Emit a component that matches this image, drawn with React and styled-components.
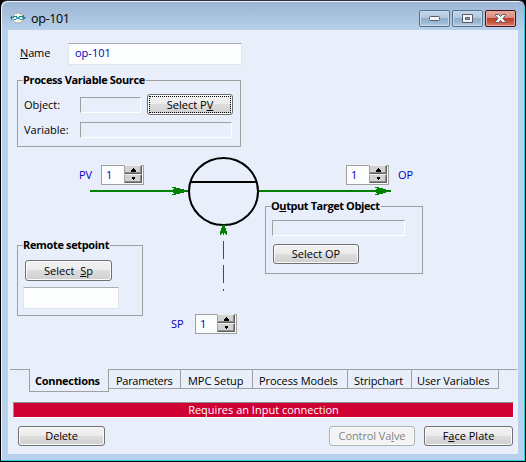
import React from "react";
import styled, { createGlobalStyle } from "styled-components";

const Global = createGlobalStyle`
  * { box-sizing: border-box; }
  body { margin: 0; background: #000; font: 11px/14px "Open Sans", "Noto Sans", sans-serif; color: #000; overflow: hidden; }
`;

const Window = styled.main`
  width: 526px; height: 462px; display: flex; flex-direction: column;
  padding: 1px 8px 7px 7px;
  border: solid 1px; border-color: #302d36 #000 #000 #000;
  border-radius: 7px 7px 0 0;
  background: linear-gradient(#9ab5d3, #b9d1ea 30px);
  box-shadow: inset -1px -1px 0 #2bd0e6, inset 1px 1px 0 #eef4fb;
`;
const TitleBar = styled.header`
  width: 508px; height: 28px; flex: none; display: flex; align-items: flex-start; padding-left: 2px;
`;
const TitleIcon = styled.svg`width: 16px; height: 12px; margin: 10px 0 0;`;
const Title = styled.h1`
  margin: 9px auto 0 5px; font: 12.5px/16px "Open Sans", sans-serif; letter-spacing: -0.35px;
`;
const Caption = styled.button`
  width: 31px; height: 17px; margin: 8px 0 0 2px; padding: 0; flex: none;
  display: flex; align-items: center; justify-content: center;
  border: 1px solid ${p => (p.$close ? "#43101d" : "#59708c")}; border-radius: 2px;
  box-shadow: inset 0 0 0 1px ${p => (p.$close ? "#e9a69b" : "#c7daed")};
  background: ${p => (p.$close
    ? "linear-gradient(#e3a196 0 15%, #d58b7e 45%, #b83e25 50%, #c9553c 75%, #d98373)"
    : "linear-gradient(#bed2e8 0 15%, #b1c8e0 45%, #91aeca 50%, #9bb7d2 75%, #b7d0e8)")};
  & + & { margin-left: 2px; }
`;
const Client = styled.section`
  width: 510px; height: 424px; background: #e8effa; display: flex; flex-direction: column; padding: 13px 5px 0 9px;
`;
const Row = styled.div`display: flex; align-items: center;`;
const Text = styled.span`
  display: block; flex: none; white-space: nowrap;
  width: ${p => (p.$w ? p.$w + "px" : "auto")};
  letter-spacing: ${p => p.$ls || 0}px;
  color: ${p => p.$color || "inherit"};
  u { text-underline-offset: 1px; text-decoration-thickness: 1px; }
`;
const NameRow = styled(Row)`
  height: 22px; padding-left: 3px;
  > ${Text} { padding-bottom: 2px; }
`;
const Entry = styled.div`
  width: ${p => p.$w}px; height: 22px; padding: 2px 6px; color: #0000c0;
  background: #fcfdfd; border: 1px solid #dfe4ec; border-top-color: #abadb3; border-radius: 1px;
`;
const Readout = styled.div`
  width: ${p => p.$w}px; height: 16px; border: 1px solid #fff;
  border-top-color: #a0a0a0; border-left-color: #a0a0a0;
`;
const Push = styled.button`
  width: ${p => p.$w}px; height: ${p => p.$h || 21}px; flex: none; padding: 0;
  display: flex; align-items: center; justify-content: center;
  font: inherit; color: ${p => (p.disabled ? "#838383" : "#000")};
  border: 1px solid ${p => (p.disabled ? "#adb2b5" : "#707070")}; border-radius: 3px;
  background: ${p => (p.disabled ? "#f4f4f4" : "linear-gradient(#f2f2f2, #ebebeb 50%, #dddddd 50%, #cfcfcf)")};
  box-shadow: inset 0 0 0 1px #fbfbfb;
  outline: ${p => (p.$focused ? "1px dotted #000" : "none")}; outline-offset: -3px;
`;
const Group = styled.fieldset`
  margin: 0; width: ${p => p.$w}px; height: ${p => p.$h}px; padding: 0 0 0 5px;
  border: 1px solid #a0a0a0; min-width: 0;
`;
const Legend = styled.legend`
  padding: 0 1px 0 0; height: 14px; line-height: 14px; font-weight: 700; white-space: nowrap;
  letter-spacing: ${p => p.$ls || 0}px;
  u { text-underline-offset: 1px; text-decoration-thickness: 1px; }
`;
const SourceGroup = styled(Group)`margin-top: 8px;`;
const ObjectRow = styled(Row)`height: 21px; margin-top: 7px; padding-left: 1px; gap: 6px;`;
const VariableRow = styled(Row)`height: 16px; margin-top: 7px; padding-left: 1px;`;
const LoopArea = styled.section`
  position: relative; height: 222px; flex: none; display: flex; align-items: flex-start;
`;
const LoopDrawing = styled.svg`
  position: absolute; left: -9px; top: 0; width: 510px; height: 212px; pointer-events: none;
`;
const LeftColumn = styled.div`width: 178px; padding-top: 18px;`;
const MiddleColumn = styled.div`width: 70px; padding-top: 167px;`;
const RightColumn = styled.div`width: 158px; padding-top: 18px;`;
const PvRow = styled(Row)`padding-left: 62px; height: 20px;`;
const SpRow = styled(Row)`margin-left: -24px; height: 20px;`;
const OpRow = styled(Row)`padding-left: 81px; height: 20px; gap: 9px;`;
const SetpointGroup = styled(Group)`margin-top: 53px; legend + * { margin: 8px 0 6px 2px; }`;
const OutputGroup = styled(Group)`margin-top: 14px; legend + * { margin: 7px 0 8px 1px; } button { margin-left: 2px; }`;
const SpinBox = styled.div`
  width: ${p => p.$w}px; height: 20px; flex: none; display: flex; justify-content: space-between; padding-left: 4px;
  color: #0000c0; background: #fcfdfd; border: 1px solid #a0a0a0; line-height: 17px;
`;
const SpinButtons = styled.div`
  width: 18px; height: 18px; margin: -1px 1px 0 0; display: flex; flex-direction: column;
`;
const SpinButton = styled.div`
  height: 9px; display: flex; align-items: center; justify-content: center;
  background: #d2d2d2; border: 1px solid #606060; border-top-color: #f0f0f0; border-left-color: #a0a0a0;
  box-shadow: inset -1px -1px 0 #8c8c8c; border-radius: 1px;
  svg { width: 5px; height: 4px; }
`;
const Tabs = styled.nav`
  height: 24px; flex: none; display: flex; align-items: flex-start; margin: 0 -4px 0 -7px;
  &::before { content: ""; width: 19px; border-top: 1px solid #a0a0a0; }
  &::after { content: ""; flex: 1; border-top: 1px solid #a0a0a0; }
`;
const Tab = styled.div`
  width: ${p => p.$w}px; height: ${p => (p.$active ? 23 : 20)}px; padding: 5px 0 0 ${p => p.$pad}px;
  border: solid #a0a0a0; border-width: ${p => (p.$active ? "0 1px 1px 1px" : "1px 1px 1px 0")};
  font-weight: ${p => (p.$active ? 700 : 400)};
  ${Text} { margin-top: ${p => (p.$active ? 0 : -1)}px; }
`;
const Status = styled.div`
  width: 501px; height: 16px; margin: 9px 0 0 -4px; flex: none;
  display: flex; justify-content: center; align-items: center; color: #fff; background: #cf0033;
  border: 1px solid #fff; border-top-color: #909090; border-left-color: #909090;
`;
const Actions = styled(Row)`margin-top: 8px; padding-left: 1px; gap: 9px;`;
const Spacer = styled.div`flex: 1;`;

function Spinner({ width = 43 }) {
  return (
    <SpinBox $w={width}>
      <span>1</span>
      <SpinButtons>
        <SpinButton><svg viewBox="0 0 5 4" shapeRendering="crispEdges"><path d="M2 0h1v1h1v1h1v2H0V2h1V1h1z" /></svg></SpinButton>
        <SpinButton><svg viewBox="0 0 5 4" shapeRendering="crispEdges"><path d="M1 0h3v2H3v1H2V2H1z" /></svg></SpinButton>
      </SpinButtons>
    </SpinBox>
  );
}

function Loop() {
  return (
    <LoopDrawing viewBox="8 147 510 212">
      <ellipse cx="223.5" cy="191.500" rx="34.500" ry="33.500" fill="#e8effa" stroke="#000" strokeWidth="2" />
      <path d="M190 181h67v2h-67z" />
      <g fill="#008000" shapeRendering="crispEdges">
        <path d="M90 190h98v2H90zM259 190h132v2H259z" />
        <path d="M172 187h4v1h4v1h4v1h4v2h-4v1h-4v1h-4v1h-4v-1h2v-1h-1v-1h2v-2h-2v-1h1v-1h-2z" />
        <path d="M375 187h4v1h4v1h3v1h5v2h-5v1h-3v1h-4v1h-4v-1h2v-1h-1v-1h2v-2h-2v-1h1v-1h-2z" />
        <path d="M222 225h3v3h1v3h1v4h-1v-1h-1v-1h-1v2h-1v-2h-1v1h-1v1h-1v-4h1v-3h1z" />
        <path d="M223 241h1v18h-1zM223 265h1v18h-1zM223 289h1v2h-1z" />
      </g>
    </LoopDrawing>
  );
}

const tabs = [
  ["Parameters", 72, 7, -0.3],
  ["MPC Setup", 72, 7, -0.05],
  ["Process Models", 95, 6, -0.1],
  ["Stripchart", 64, 6, -0.15],
  ["User Variables", 87, 5, -0.1],
];

export default function App() {
  return (
    <>
      <Global />
      <Window>
        <TitleBar>
          <TitleIcon viewBox="0 0 16 12">
            <circle cx="8" cy="6" r="5" fill="#f6f5ef" stroke="#96968f" strokeDasharray="2 1" />
            <path d="M0 5h1V4h1v1h2v1H2v2H1V6H0zM12 5h1V3h1v2h2v1h-1v1h-1v1h-1V6h-1z" fill="#1684c4" />
            <path d="M3 4h4v1H3zM9 4h4v1H9zM4 7h2v1H4zM10 7h2v1h-2z" fill="#18905c" />
            <path d="M6 5h4v2H6z" fill="#2ba5d6" />
          </TitleIcon>
          <Title>op-101</Title>
          <Caption aria-label="Minimize">
            <svg width="11" height="5"><rect x=".5" y=".5" width="10" height="4" rx="1" fill="#f5f5f5" stroke="#555b6c" /></svg>
          </Caption>
          <Caption aria-label="Maximize">
            <svg width="11" height="9"><path d="M.5.5h10v8H.5zM3.500 3.500v2h4v-2z" fill="#f5f5f5" stroke="#555b6c" fillRule="evenodd" /></svg>
          </Caption>
          <Caption $close aria-label="Close">
            <svg width="11" height="9"><path d="M.5.5h3l2 2 2-2h3v1L8 4.500l2.500 3v1h-3l-2-2-2 2h-3v-1L3 4.500l-2.500-3z" fill="#f5f5f5" stroke="#555b6c" /></svg>
          </Caption>
        </TitleBar>
        <Client>
          <NameRow>
            <Text $w={48} $ls={-0.15}><u>N</u>ame</Text>
            <Entry $w={174}><Text>op-101</Text></Entry>
          </NameRow>
          <SourceGroup $w={224} $h={74}>
            <Legend $ls={-0.37}>Process Variable Source</Legend>
            <ObjectRow>
              <Text $w={50} $ls={-0.05}>Object:</Text>
              <Readout $w={61} />
              <Push $w={86} $focused><Text>Select P<u>V</u></Text></Push>
            </ObjectRow>
            <VariableRow>
              <Text $w={56}>Variable:</Text>
              <Readout $w={152} />
            </VariableRow>
          </SourceGroup>
          <LoopArea>
            <Loop />
            <LeftColumn>
              <PvRow><Text $w={22} $color="#0000c0">PV</Text><Spinner /></PvRow>
              <SetpointGroup $w={126} $h={78}>
                <Legend $ls={-0.35}>Remote setpoint</Legend>
                <Push $w={87}><Text>Select &nbsp;<u>S</u>p</Text></Push>
                <Entry $w={96} />
              </SetpointGroup>
            </LeftColumn>
            <MiddleColumn>
              <SpRow><Text $w={24} $color="#0000c0">SP</Text><Spinner width={42} /></SpRow>
            </MiddleColumn>
            <RightColumn>
              <OpRow><Spinner /><Text $color="#0000c0">OP</Text></OpRow>
              <OutputGroup $w={158} $h={75}>
                <Legend $ls={-0.42}>O<u>u</u>tput Target Object</Legend>
                <Readout $w={133} />
                <Push $w={86} $h={20}><Text>Select OP</Text></Push>
              </OutputGroup>
            </RightColumn>
          </LoopArea>
          <Tabs>
            <Tab $active $w={80} $pad={5}><Text $ls={-0.3}>Connections</Text></Tab>
            {tabs.map(([label, w, pad, ls]) => (
              <Tab key={label} $w={w} $pad={pad}><Text $ls={ls}>{label}</Text></Tab>
            ))}
          </Tabs>
          <Status><Text>Requires an Input connection</Text></Status>
          <Actions>
            <Push $w={87} $h={20}><Text $ls={-0.15}>Delete</Text></Push>
            <Spacer />
            <Push $w={86} $h={20} disabled><Text $ls={-0.1}>Control Va<u>l</u>ve</Text></Push>
            <Push $w={89} $h={20}><Text>F<u>a</u>ce Plate</Text></Push>
          </Actions>
        </Client>
      </Window>
    </>
  );
}
